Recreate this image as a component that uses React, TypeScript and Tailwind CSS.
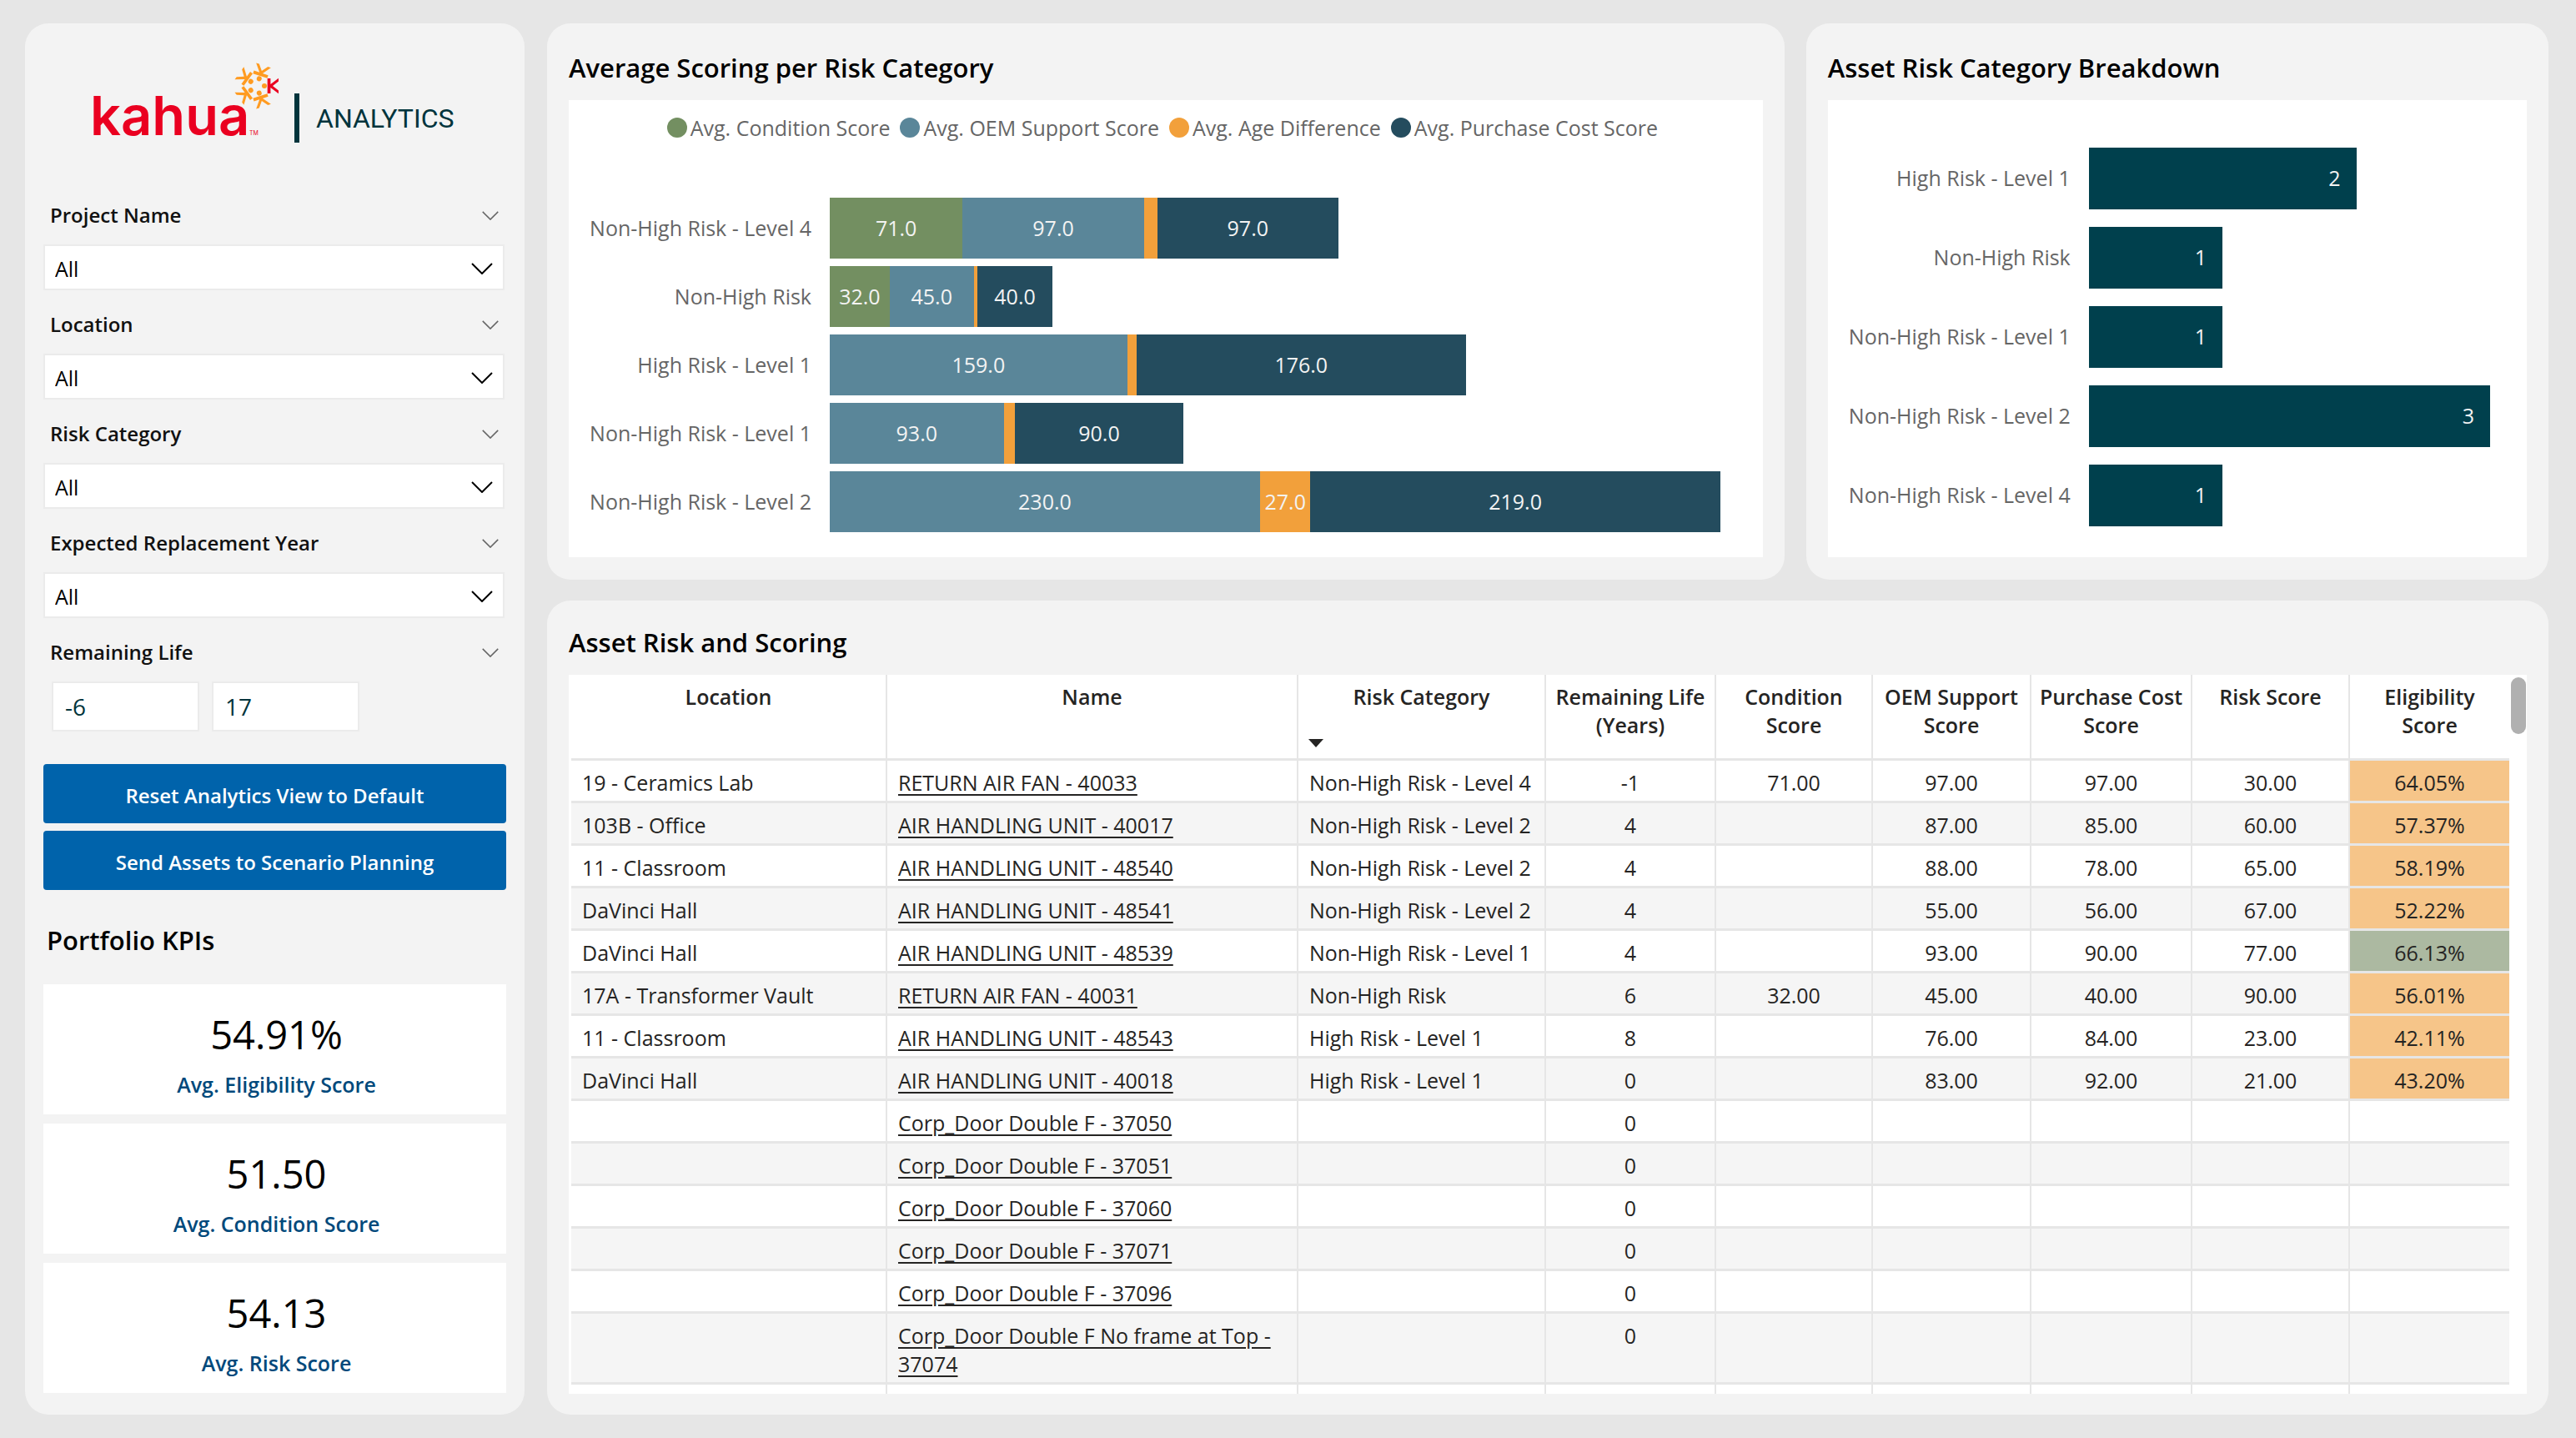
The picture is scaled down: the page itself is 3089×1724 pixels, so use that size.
import { useState } from "react";
import type { ReactNode } from "react";
import clsx from "clsx";

const filters = [
  "Project Name",
  "Location",
  "Risk Category",
  "Expected Replacement Year",
];

const kpis = [
  { value: "54.91%", label: "Avg. Eligibility Score" },
  { value: "51.50", label: "Avg. Condition Score" },
  { value: "54.13", label: "Avg. Risk Score" },
];

const series = [
  { label: "Avg. Condition Score", color: "bg-[#738f61]" },
  { label: "Avg. OEM Support Score", color: "bg-[#5a8699]" },
  { label: "Avg. Age Difference", color: "bg-[#f2a03b]" },
  { label: "Avg. Purchase Cost Score", color: "bg-[#244c5e]" },
];

// values follow the order of the series above
const scoring = [
  { category: "Non-High Risk - Level 4", values: [71, 97, 7, 97] },
  { category: "Non-High Risk", values: [32, 45, 2, 40] },
  { category: "High Risk - Level 1", values: [0, 159, 5, 176] },
  { category: "Non-High Risk - Level 1", values: [0, 93, 6, 90] },
  { category: "Non-High Risk - Level 2", values: [0, 230, 27, 219] },
];
const scoringMax = 476;

const breakdown = [
  { category: "High Risk - Level 1", count: 2 },
  { category: "Non-High Risk", count: 1 },
  { category: "Non-High Risk - Level 1", count: 1 },
  { category: "Non-High Risk - Level 2", count: 3 },
  { category: "Non-High Risk - Level 4", count: 1 },
];
const breakdownMax = 3;

const columns = [
  { title: "Location", width: "w-[379px]" },
  { title: "Name", width: "w-[493px]" },
  { title: "Risk Category", width: "w-[297px]", sorted: true },
  { title: "Remaining Life (Years)", width: "w-[204px]" },
  { title: "Condition Score", width: "w-[188px]" },
  { title: "OEM Support Score", width: "w-[190px]" },
  { title: "Purchase Cost Score", width: "w-[193px]" },
  { title: "Risk Score", width: "w-[189px]" },
  { title: "Eligibility Score", width: "w-[191px]" },
];

const assets = [
  ["19 - Ceramics Lab", "RETURN AIR FAN - 40033", "Non-High Risk - Level 4", "-1", "71.00", "97.00", "97.00", "30.00", "64.05%"],
  ["103B - Office", "AIR HANDLING UNIT - 40017", "Non-High Risk - Level 2", "4", "", "87.00", "85.00", "60.00", "57.37%"],
  ["11 - Classroom", "AIR HANDLING UNIT - 48540", "Non-High Risk - Level 2", "4", "", "88.00", "78.00", "65.00", "58.19%"],
  ["DaVinci Hall", "AIR HANDLING UNIT - 48541", "Non-High Risk - Level 2", "4", "", "55.00", "56.00", "67.00", "52.22%"],
  ["DaVinci Hall", "AIR HANDLING UNIT - 48539", "Non-High Risk - Level 1", "4", "", "93.00", "90.00", "77.00", "66.13%"],
  ["17A - Transformer Vault", "RETURN AIR FAN - 40031", "Non-High Risk", "6", "32.00", "45.00", "40.00", "90.00", "56.01%"],
  ["11 - Classroom", "AIR HANDLING UNIT - 48543", "High Risk - Level 1", "8", "", "76.00", "84.00", "23.00", "42.11%"],
  ["DaVinci Hall", "AIR HANDLING UNIT - 40018", "High Risk - Level 1", "0", "", "83.00", "92.00", "21.00", "43.20%"],
  ["", "Corp_Door Double F - 37050", "", "0", "", "", "", "", ""],
  ["", "Corp_Door Double F - 37051", "", "0", "", "", "", "", ""],
  ["", "Corp_Door Double F - 37060", "", "0", "", "", "", "", ""],
  ["", "Corp_Door Double F - 37071", "", "0", "", "", "", "", ""],
  ["", "Corp_Door Double F - 37096", "", "0", "", "", "", "", ""],
  ["", "Corp_Door Double F No frame at Top - 37074", "", "0", "", "", "", "", ""],
  ["", "", "", "", "", "", "", "", ""],
];

const Logo = () => (
  <svg
    viewBox="100 70 460 110"
    className="h-[110px] w-[460px]"
    role="img"
    aria-label="Kahua Analytics"
  >
    <text x="108" y="162" fontSize="65" fontWeight="600" fill="#ea0020" fontFamily="Inter, sans-serif">
      kahua
    </text>
    <text x="299" y="162" fontSize="7" fill="#ea0020" fontFamily="Inter, sans-serif">
      TM
    </text>
    {[0, 72, 144, 216, 288].map((angle) => (
      <g key={angle} transform={`translate(308 103) rotate(${angle})`}>
        <circle cx="9" cy="0" r="3" fill="#ff9b21" />
        <path
          d="M12.7 -9H16.4V-2L26 -9.3V-5.5L19 0L26 5.5V9.3L16.4 2V9H12.7Z"
          fill={angle === 0 ? "#ea0020" : "#ff9b21"}
        />
      </g>
    ))}
    <rect x="353" y="112" width="6" height="59" fill="#00343c" />
    <text x="379" y="153" fontSize="32" fill="#00343c" fontFamily="Roboto, sans-serif">
      ANALYTICS
    </text>
  </svg>
);

const Chevron = ({ className }: { className: string }) => (
  <svg viewBox="0 0 26 14" fill="none" stroke="currentColor" className={className}>
    <path d="M1 1L13 13L25 1" strokeWidth="2" />
  </svg>
);

const FilterHeader = ({ label, htmlFor }: { label: string; htmlFor: string }) => (
  <div className="flex h-9 items-center justify-between pr-[7px] pl-2">
    <label htmlFor={htmlFor} className="text-[24px] leading-9 font-semibold text-[#111]">
      {label}
    </label>
    <button type="button" aria-label={`Collapse ${label}`} className="text-[#666]">
      <Chevron className="h-[11px] w-5" />
    </button>
  </div>
);

const Filter = ({ label }: { label: string }) => {
  const id = label.toLowerCase().replace(/ /g, "-");

  return (
    <div className="flex flex-col gap-[17px]">
      <FilterHeader label={label} htmlFor={id} />
      <div className="relative">
        <select
          id={id}
          className="block h-[55px] w-full appearance-none border-2 border-[#ebebeb] bg-white px-3 pt-1 text-[25px] text-black"
        >
          <option>All</option>
        </select>
        <Chevron className="pointer-events-none absolute top-[22px] right-[14px] h-[14px] w-[26px]" />
      </div>
    </div>
  );
};

const RemainingLife = () => {
  const [min, setMin] = useState("-6");
  const [max, setMax] = useState("17");
  const box =
    "h-[60px] w-[177px] border-2 border-[#ebebeb] bg-white px-[14px] text-[28px] text-[#00343c]";

  return (
    <div className="flex flex-col gap-[17px]">
      <FilterHeader label="Remaining Life" htmlFor="remaining-life" />
      <div className="flex gap-[15px] pl-[10px]">
        <input id="remaining-life" className={box} value={min} onChange={(e) => setMin(e.target.value)} />
        <input aria-label="Remaining Life maximum" className={box} value={max} onChange={(e) => setMax(e.target.value)} />
      </div>
    </div>
  );
};

const Sidebar = () => (
  <aside className="flex w-[599px] shrink-0 flex-col rounded-[28px] bg-[#f3f3f3] px-[22px] pt-[42px] pb-[26px]">
    <div className="pl-12">
      <Logo />
    </div>
    <div className="mt-[60px] flex flex-col gap-[23px] pr-[2px]">
      {filters.map((label) => (
        <Filter key={label} label={label} />
      ))}
      <RemainingLife />
    </div>
    <div className="mt-[39px] flex flex-col gap-[9px]">
      {["Reset Analytics View to Default", "Send Assets to Scenario Planning"].map((text) => (
        <button
          key={text}
          type="button"
          className="h-[71px] rounded bg-[#0063ab] pt-1 text-[24px] font-semibold text-white"
        >
          {text}
        </button>
      ))}
    </div>
    <h2 className="mt-[38px] pl-1 text-[31px] leading-[44px] font-semibold text-black">
      Portfolio KPIs
    </h2>
    <div className="mt-[31px] flex flex-1 flex-col gap-[11px]">
      {kpis.map((kpi) => (
        <div key={kpi.label} className="flex flex-1 flex-col items-center justify-center bg-white pt-5 pl-1">
          <div className="text-[47px] leading-[64px] text-black">{kpi.value}</div>
          <div className="text-[25px] leading-[56px] font-semibold text-[#00497b]">{kpi.label}</div>
        </div>
      ))}
    </div>
  </aside>
);

const Panel = ({ title, children, className }: { title: string; children: ReactNode; className?: string }) => (
  <section className={clsx("flex flex-col rounded-[28px] bg-[#f3f3f3] px-[26px]", className)}>
    <h2 className="mb-[17px] text-[31px] leading-[44px] font-semibold text-black">{title}</h2>
    {children}
  </section>
);

const ScoringChart = () => (
  <div className="flex h-[548px] flex-col bg-white pt-[15px]">
    <ul className="flex justify-center gap-3 pr-2 text-[25px] leading-9 text-[#666]">
      {series.map((s) => (
        <li key={s.label} className="flex items-center gap-1">
          <span className={clsx("size-6 rounded-full", s.color)} />
          {s.label}
        </li>
      ))}
    </ul>
    <div className="mt-[66px] flex flex-col gap-[9px] pr-[51px]">
      {scoring.map((row) => (
        <div key={row.category} className="flex h-[73px] items-center">
          <span className="w-[313px] shrink-0 pr-[22px] text-right text-[25px] text-[#666]">
            {row.category}
          </span>
          <div className="flex h-full flex-1">
            {row.values.map((value, i) => (
              <div
                key={series[i].label}
                className={clsx(
                  "flex items-center justify-center text-[25px] text-[#f3f3f3]",
                  series[i].color,
                )}
                style={{ width: `${(value / scoringMax) * 100}%` }}
              >
                {value > 20 && value.toFixed(1)}
              </div>
            ))}
          </div>
        </div>
      ))}
    </div>
  </div>
);

const BreakdownChart = () => (
  <div className="flex h-[548px] flex-col gap-[21px] bg-white pt-[57px] pr-[44px]">
    {breakdown.map((row) => (
      <div key={row.category} className="flex h-[74px] items-center">
        <span className="w-[313px] shrink-0 pr-[22px] text-right text-[25px] text-[#666]">
          {row.category}
        </span>
        <div className="h-full flex-1">
          <div
            className="flex h-full items-center justify-end bg-[#00404d] pr-[19px] text-[25px] text-[#f3f3f3]"
            style={{ width: `${(row.count / breakdownMax) * 100}%` }}
          >
            {row.count}
          </div>
        </div>
      </div>
    ))}
  </div>
);

const AssetTable = () => (
  <div className="flex min-h-0 flex-1 overflow-hidden bg-white pl-[3px]">
    <table className="w-full flex-1 table-fixed border-separate border-spacing-0 self-start text-[25px] leading-[34px] text-[#252423]">
      <thead>
        <tr>
          {columns.map((col) => (
            <th
              key={col.title}
              scope="col"
              className={clsx(
                "h-[103px] border-r-2 border-b-3 border-[#e6e6e6] px-2 pt-[9px] align-top font-semibold last:border-r-0",
                col.width,
              )}
            >
              {col.title}
              {col.sorted && (
                <svg viewBox="0 0 18 10" className="mt-[34px] ml-1 h-[10px] w-[18px]">
                  <path d="M0 0H18L9 10Z" fill="#252423" />
                </svg>
              )}
            </th>
          ))}
        </tr>
      </thead>
      <tbody>
        {assets.map((row, i) => (
          <tr key={row[1]} className={i % 2 ? "bg-[#f5f5f5]" : "bg-white"}>
            {row.map((cell, j) => (
              <td
                key={columns[j].title}
                className={clsx(
                  "h-[51px] border-r-2 border-b-3 border-[#e6e6e6] px-[13px] pt-[9px] pb-[5px] align-top last:border-r-0",
                  j !== 1 && "whitespace-nowrap",
                  j > 2 && "text-center",
                  j === 8 && cell && (cell === "66.13%" ? "bg-[#acb9a1]" : "bg-[#f6c589]"),
                )}
              >
                {j === 1 && cell ? (
                  <a href="#" className="underline underline-offset-4">
                    {cell}
                  </a>
                ) : (
                  cell
                )}
              </td>
            ))}
          </tr>
        ))}
      </tbody>
    </table>
    <div className="w-[21px] shrink-0 pt-[3px] pl-[2px]">
      <div className="h-[68px] w-[18px] rounded-full bg-[#b0b0b0]" />
    </div>
  </div>
);

const App = () => {
  return (
    <main className="flex h-screen gap-[27px] bg-[#e6e6e6] py-7 pr-[33px] pl-[30px] font-['Open_Sans','Noto_Sans',sans-serif]">
      <Sidebar />
      <div className="flex min-w-0 flex-1 flex-col gap-[25px]">
        <div className="grid grid-cols-[5fr_3fr] gap-[26px]">
          <Panel title="Average Scoring per Risk Category" className="pt-[31px] pb-[27px]">
            <ScoringChart />
          </Panel>
          <Panel title="Asset Risk Category Breakdown" className="pt-[31px] pb-[27px]">
            <BreakdownChart />
          </Panel>
        </div>
        <Panel title="Asset Risk and Scoring" className="min-h-0 flex-1 pt-7 pb-[25px]">
          <AssetTable />
        </Panel>
      </div>
    </main>
  );
};

export default App;
